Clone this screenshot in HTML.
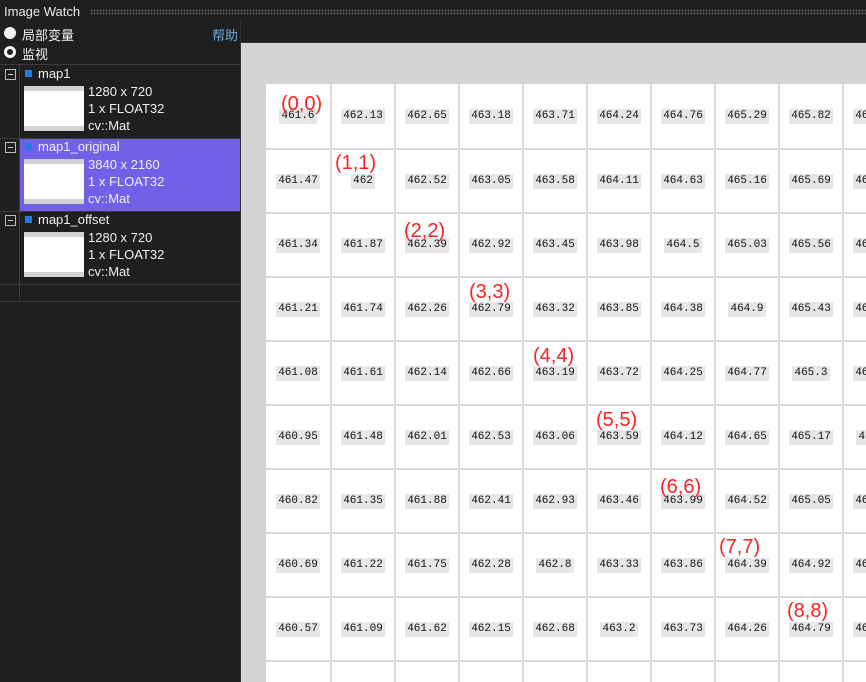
<!DOCTYPE html>
<html><head><meta charset="utf-8"><style>
*{margin:0;padding:0;box-sizing:border-box}
html{width:866px;height:682px;overflow:hidden}
body{width:866px;height:682px;overflow:hidden;background:#1f1f1f;position:relative;font-family:"Liberation Sans","Noto Sans CJK SC",sans-serif;color:#f0f0f0;font-size:13px}
.a{position:absolute}
.dots{position:absolute;left:90px;top:9px;width:776px;height:6px;background-image:radial-gradient(circle,#5a5a5a 0.8px,transparent 1px);background-size:3px 3px}
.radio{position:absolute;width:12px;height:12px;border-radius:50%;background:#f4f4f4}
.radio.sel::after{content:"";position:absolute;left:3px;top:3px;width:6px;height:6px;border-radius:50%;background:#1f1f1f}
.hline{position:absolute;left:0;width:240px;height:1px;background:#3a3a3a}
.minus{position:absolute;left:5px;width:11px;height:11px;border:1px solid #bbb}
.minus::after{content:"";position:absolute;left:2px;top:4px;width:5px;height:1px;background:#ccc}
.sq{position:absolute;left:25px;width:7px;height:7px;background:#1a7ee6}
.thumb{position:absolute;left:24px;width:60px;height:45px;background:#fff;border-top:5px solid #d2d2d2;border-bottom:5px solid #d2d2d2}
.info{position:absolute;left:88px;line-height:17px;font-size:13px}
#wrap{position:absolute;left:266px;top:84px;width:600px;height:598px;overflow:hidden}
#grid{display:grid;grid-template-columns:64px repeat(9,62px);grid-template-rows:64px repeat(9,62px);gap:2px;background:#d9d9d9;width:650px}
#grid div{background:#fff;display:flex;align-items:center;justify-content:center}
#grid span{font-family:"Liberation Mono",monospace;font-size:11px;color:#111;background:#e6e6e6;padding:1px 2px;line-height:13px}
.lbl{position:absolute;color:#ff2020;font-size:20px;line-height:22px;font-family:"Liberation Sans",sans-serif}
</style></head><body>
<div class="a" style="left:4px;top:4px;font-size:13px;color:#e8e8e8">Image Watch</div>
<div class="dots"></div>
<div class="radio" style="left:4px;top:27px"></div>
<div class="a" style="left:22px;top:25px">局部变量</div>
<div class="a" style="left:212px;top:25px;color:#6fa8dc">帮助</div>
<div class="radio sel" style="left:4px;top:46px"></div>
<div class="a" style="left:22px;top:44px">监视</div>
<div class="hline" style="top:64px"></div>
<div class="a" style="left:19px;top:65px;width:1px;height:236px;background:#3a3a3a"></div>
<div class="a" style="left:240px;top:20px;width:1px;height:662px;background:#333"></div>
<div class="a" style="left:20px;top:139px;width:220px;height:72px;background:#7160e8"></div>
<div class="minus" style="top:69px"></div><div class="sq" style="top:70px"></div>
<div class="a" style="left:38px;top:66px">map1</div>
<div class="thumb" style="top:86px"></div>
<div class="info" style="top:83px">1280 x 720<br>1 x FLOAT32<br>cv::Mat</div>
<div class="hline" style="top:138px"></div>
<div class="minus" style="top:142px"></div><div class="sq" style="top:143px"></div>
<div class="a" style="left:38px;top:139px">map1_original</div>
<div class="thumb" style="top:159px"></div>
<div class="info" style="top:156px">3840 x 2160<br>1 x FLOAT32<br>cv::Mat</div>
<div class="hline" style="top:211px"></div>
<div class="minus" style="top:215px"></div><div class="sq" style="top:216px"></div>
<div class="a" style="left:38px;top:212px">map1_offset</div>
<div class="thumb" style="top:232px"></div>
<div class="info" style="top:229px">1280 x 720<br>1 x FLOAT32<br>cv::Mat</div>
<div class="hline" style="top:284px"></div>
<div class="hline" style="top:301px"></div>
<div class="a" style="left:241px;top:43px;width:625px;height:639px;background:#d4d4d4"></div>
<div class="a" style="left:241px;top:42px;width:625px;height:1px;background:#333"></div>
<div id="wrap"><div id="grid">
<div><span>461.6</span></div><div><span>462.13</span></div><div><span>462.65</span></div><div><span>463.18</span></div><div><span>463.71</span></div><div><span>464.24</span></div><div><span>464.76</span></div><div><span>465.29</span></div><div><span>465.82</span></div><div><span>466.35</span></div>
<div><span>461.47</span></div><div><span>462</span></div><div><span>462.52</span></div><div><span>463.05</span></div><div><span>463.58</span></div><div><span>464.11</span></div><div><span>464.63</span></div><div><span>465.16</span></div><div><span>465.69</span></div><div><span>466.22</span></div>
<div><span>461.34</span></div><div><span>461.87</span></div><div><span>462.39</span></div><div><span>462.92</span></div><div><span>463.45</span></div><div><span>463.98</span></div><div><span>464.5</span></div><div><span>465.03</span></div><div><span>465.56</span></div><div><span>466.09</span></div>
<div><span>461.21</span></div><div><span>461.74</span></div><div><span>462.26</span></div><div><span>462.79</span></div><div><span>463.32</span></div><div><span>463.85</span></div><div><span>464.38</span></div><div><span>464.9</span></div><div><span>465.43</span></div><div><span>465.96</span></div>
<div><span>461.08</span></div><div><span>461.61</span></div><div><span>462.14</span></div><div><span>462.66</span></div><div><span>463.19</span></div><div><span>463.72</span></div><div><span>464.25</span></div><div><span>464.77</span></div><div><span>465.3</span></div><div><span>465.83</span></div>
<div><span>460.95</span></div><div><span>461.48</span></div><div><span>462.01</span></div><div><span>462.53</span></div><div><span>463.06</span></div><div><span>463.59</span></div><div><span>464.12</span></div><div><span>464.65</span></div><div><span>465.17</span></div><div><span>465.7</span></div>
<div><span>460.82</span></div><div><span>461.35</span></div><div><span>461.88</span></div><div><span>462.41</span></div><div><span>462.93</span></div><div><span>463.46</span></div><div><span>463.99</span></div><div><span>464.52</span></div><div><span>465.05</span></div><div><span>465.57</span></div>
<div><span>460.69</span></div><div><span>461.22</span></div><div><span>461.75</span></div><div><span>462.28</span></div><div><span>462.8</span></div><div><span>463.33</span></div><div><span>463.86</span></div><div><span>464.39</span></div><div><span>464.92</span></div><div><span>465.44</span></div>
<div><span>460.57</span></div><div><span>461.09</span></div><div><span>461.62</span></div><div><span>462.15</span></div><div><span>462.68</span></div><div><span>463.2</span></div><div><span>463.73</span></div><div><span>464.26</span></div><div><span>464.79</span></div><div><span>465.31</span></div>
<div></div><div></div><div></div><div></div><div></div><div></div><div></div><div></div><div></div><div></div>
</div></div>
<div class="lbl" style="left:281px;top:93px">(0,0)</div>
<div class="lbl" style="left:335px;top:152px">(1,1)</div>
<div class="lbl" style="left:404px;top:220px">(2,2)</div>
<div class="lbl" style="left:469px;top:281px">(3,3)</div>
<div class="lbl" style="left:533px;top:345px">(4,4)</div>
<div class="lbl" style="left:596px;top:409px">(5,5)</div>
<div class="lbl" style="left:660px;top:476px">(6,6)</div>
<div class="lbl" style="left:719px;top:536px">(7,7)</div>
<div class="lbl" style="left:787px;top:600px">(8,8)</div>
</body></html>
